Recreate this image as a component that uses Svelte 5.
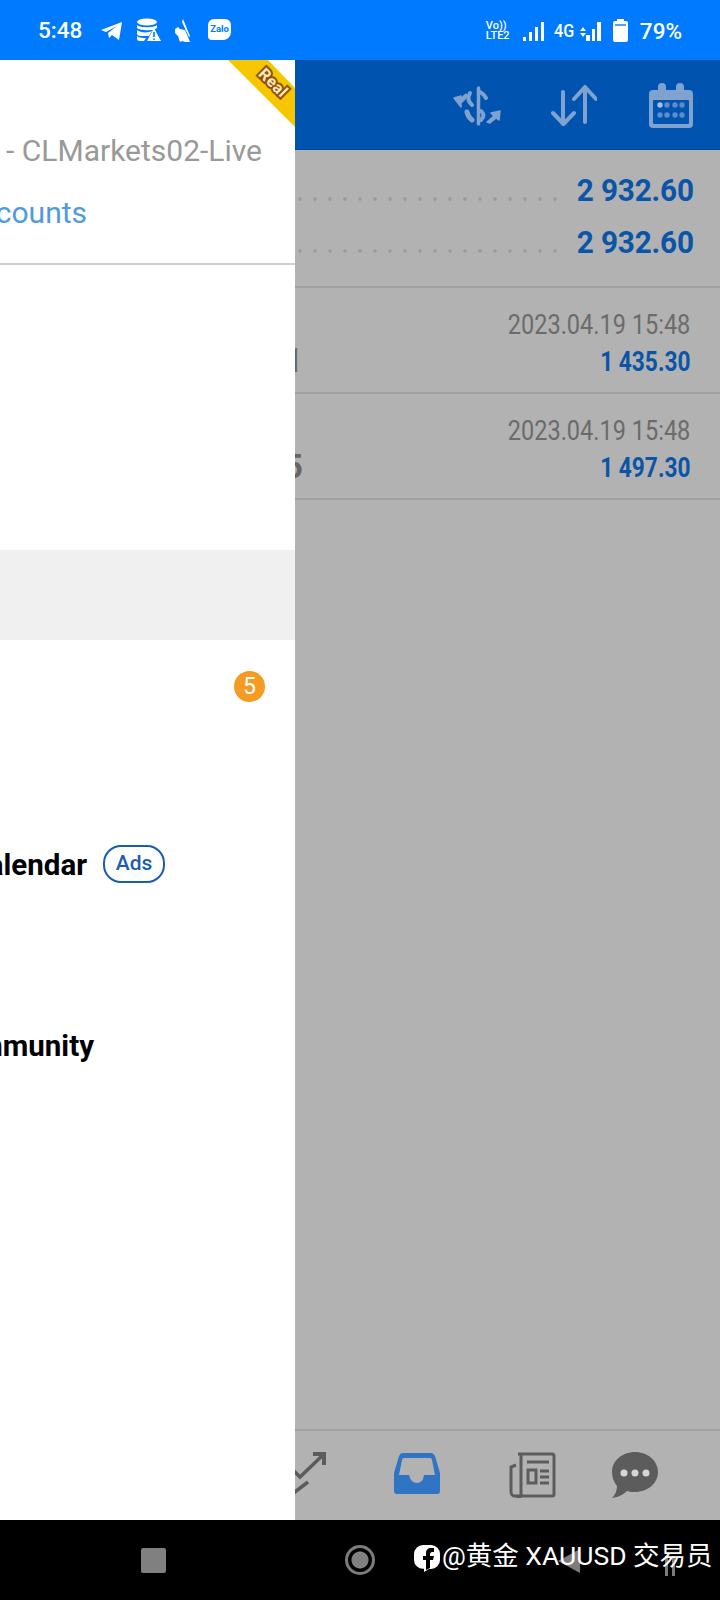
<script>
  const summary = [{ value: '2 932.60' }, { value: '2 932.60' }];
  const deals = [
    { left: '0.01', time: '2023.04.19 15:48', amount: '1 435.30' },
    { left: '0.05', time: '2023.04.19 15:48', amount: '1 497.30' }
  ];
</script>

<div class="screen">
  <div class="status">
    <span class="clock">5:48</span>
    <svg class="st telegram" viewBox="0 0 22 18"><path d="M0 8 21 0 18 18 11 13 8 16 7 11 16 4 5 10Z" fill="#fff"/></svg>
    <svg class="st db" viewBox="0 0 24 24">
      <g fill="#fff">
        <ellipse cx="10" cy="4" rx="10" ry="3.5"/>
        <path d="M0 7c3 3 17 3 20 0v3c-3 3-17 3-20 0zM0 12c3 3 12 3 15 1l-3 5H4c-2 0-4-1-4-2zM0 18c2 2 6 2 9 2l-2 3H3c-2 0-3-1-3-2z"/>
        <path d="M17 10 24 23H10Z"/>
      </g>
      <path d="M17 14v5M17 20.500v1.500" stroke="#007aff" stroke-width="1.600"/>
    </svg>
    <svg class="st broom" viewBox="0 0 18 24"><path d="M9 0l7 17-1 1L8 3z M1 10l3-2 2 2 5 1 3 7 2 5-5 0-3-1-2 1-2-6-3-3z" fill="#fff"/></svg>
    <span class="zalo">Zalo</span>

    <span class="spacer"></span>

    <span class="volte"><b>Vo))</b><b>LTE2</b></span>
    <span class="bars"><i style="height: 4px"></i><i style="height: 9px"></i><i style="height: 14px"></i><i style="height: 19px"></i></span>
    <span class="net">4G</span>
    <span class="updown"><em></em><em class="down"></em></span>
    <span class="bars second"><i style="height: 6px"></i><i style="height: 12px"></i><i style="height: 19px"></i></span>
    <svg class="battery" viewBox="0 0 15 23"><path d="M4 0h7v2h2a2 2 0 0 1 2 2v17a2 2 0 0 1-2 2H2a2 2 0 0 1-2-2V4a2 2 0 0 1 2-2h2z" fill="#fff"/><rect x="2" y="5" width="11" height="2" fill="#007aff" opacity=".7"/></svg>
    <span class="pct">79%</span>
  </div>

  <div class="content">
    <div class="main">
      <header class="toolbar">
        <svg class="ic-dollar" viewBox="0 0 49 40" fill="none" stroke="#7fa2cf" stroke-width="4" stroke-linecap="round">
          <path d="M25.500 2V38" stroke-width="3.500"/>
          <path d="M17 7Q13 14 19 19"/>
          <path d="M14 26Q15 31 19 34" stroke-width="5"/>
          <path d="M27 6Q31 8 33 12"/>
          <path d="M28 25Q33 29 28 34"/>
          <path d="M1 12 8 10 6 14 13 8 14 11 8 17 8 21Z" fill="#7fa2cf" stroke-width="1.500" stroke-linejoin="round"/>
          <path d="M47 25 38 27 41 30 34 36 37 37 43 32 46 34Z" fill="#7fa2cf" stroke-width="1.500" stroke-linejoin="round"/>
        </svg>
        <svg class="ic-sort" viewBox="0 0 46 41" fill="none" stroke="#7fa2cf" stroke-width="4" stroke-linecap="round" stroke-linejoin="round">
          <path d="M12 7v32M2 28l10.500 11L23 28"/>
          <path d="M34 37V3M23 14 34 2l11 12"/>
        </svg>
        <svg class="ic-cal" viewBox="0 0 44 45">
          <rect x="0" y="7" width="44" height="38" rx="4" fill="#7fa2cf"/>
          <rect x="4" y="17" width="36" height="24" rx="1" fill="#0054b0"/>
          <rect x="9" y="0" width="8" height="11" rx="4" fill="#7fa2cf"/>
          <rect x="27" y="0" width="8" height="11" rx="4" fill="#7fa2cf"/>
          <g fill="#5f8cc4">
            <circle cx="11" cy="22" r="2.700" fill="#a9c0df"/><circle cx="18" cy="22" r="2.700"/><circle cx="26" cy="22" r="2.700"/><circle cx="33" cy="22" r="2.700"/>
            <circle cx="11" cy="32" r="2.700"/><circle cx="18" cy="32" r="2.700"/><circle cx="26" cy="32" r="2.700"/><circle cx="33" cy="32" r="2.700"/>
          </g>
        </svg>
      </header>

      <section class="summary">
        {#each summary as row}
          <div class="sum-row">
            <span class="dots"></span>
            <span class="sum-val">{row.value}</span>
          </div>
        {/each}
      </section>

      {#each deals as deal}
        <div class="deal">
          <span class="deal-left">{deal.left}</span>
          <div class="deal-right">
            <span class="time">{deal.time}</span>
            <span class="amount">{deal.amount}</span>
          </div>
        </div>
      {/each}

      <div class="fill"></div>

      <nav class="tabs">
        <svg class="tab-trade" viewBox="0 0 46 44" fill="none" stroke="#5c5c5c" stroke-width="3.500">
          <path d="M34 3H45V14" stroke-width="4"/>
          <path d="M45 3 21 26 10 15"/>
          <path d="M29 31 8 47"/>
        </svg>
        <svg class="tab-inbox" viewBox="0 0 46 41">
          <path d="M10 0H36a5 5 0 0 1 5 3l5 17V38a3 3 0 0 1-3 3H3a3 3 0 0 1-3-3V20L5 3a5 5 0 0 1 5-3Z" fill="#2f75c4"/>
          <path d="M10 5H36a2 2 0 0 1 2 2L41 22H30Q29 30 23 30Q17 30 15 22H5L8 7a2 2 0 0 1 2-2Z" fill="#b2b2b2"/>
        </svg>
        <svg class="tab-news" viewBox="0 0 47 46" fill="none" stroke="#5c5c5c">
          <path d="M9 2h34a2 2 0 0 1 2 2v38a2 2 0 0 1-2 2H8" stroke-width="3"/>
          <path d="M12 2v40a2 2 0 0 1-4 2H6a4 4 0 0 1-4-4V15l5-2" stroke-width="3"/>
          <path d="M18 10h22" stroke-width="3"/>
          <rect x="19" y="18" width="8" height="13" stroke-width="3"/>
          <path d="M31 19h9M31 25h9M31 31h9" stroke-width="3"/>
        </svg>
        <svg class="tab-chat" viewBox="0 0 46 46">
          <path d="M23 0c13 0 23 9 23 20S36 40 23 40c-3 0-5 0-8 -1-3 3-8 6-15 7 3-3 5-7 5-12C2 30 0 26 0 20 0 9 10 0 23 0z" fill="#5c5c5c"/>
          <circle cx="12" cy="21" r="3.500" fill="#d6d6d6"/><circle cx="23" cy="21" r="3.500" fill="#d6d6d6"/><circle cx="34" cy="21" r="3.500" fill="#d6d6d6"/>
        </svg>
      </nav>
    </div>

    <aside class="drawer">
      <div class="ribbon"></div>
      <span class="real">Real</span>

      <div class="server"><span>Server - CLMarkets02-Live</span></div>
      <div class="manage"><span>Manage accounts</span></div>
      <div class="rule"></div>
      <div class="selected"></div>
      <div class="badge-row"><span class="badge">5</span></div>
      <div class="calendar"><span class="item">Economic calendar</span><span class="ads">Ads</span></div>
      <div class="community"><span class="item">Traders Community</span></div>
    </aside>
  </div>

  <div class="navbar">
    <span class="nav-square"></span>
    <span class="nav-circle"></span>
    <span class="nav-back"></span>
    <span class="nav-pause"></span>
    <div class="watermark">
      <svg class="fb" viewBox="0 0 26 27"><path d="M9 0h8a9 9 0 0 1 9 9v6a9 9 0 0 1-9 9h-2l-5 3v-3.200A9 9 0 0 1 0 15V9a9 9 0 0 1 9-9z" fill="#fff"/><path d="M12 25V15H9v-4h3V8c0-3 2-5 5-5h3v4h-2c-1 0-2 1-2 2v2h4l-1 4h-3v8z" fill="#000"/></svg>
      <span>@黄金 XAUUSD 交易员</span>
    </div>
  </div>
</div>

<style>
  :global(body) {
    margin: 0;
    background: #000;
  }

  .screen {
    width: 720px;
    height: 1600px;
    display: flex;
    flex-direction: column;
    overflow: hidden;
    font-family: Roboto, "Liberation Sans", "Noto Sans CJK SC", sans-serif;
  }

  /* status bar */
  .status {
    height: 60px;
    flex: none;
    background: #007aff;
    color: #fff;
    display: flex;
    align-items: center;
    padding: 0 38px 0 38px;
    box-sizing: border-box;
  }

  .clock {
    font-size: 22.500px;
    font-weight: 500;
    width: 64px;
  }

  .st { display: block; flex: none; }
  .telegram { width: 22px; height: 18px; margin-left: -1px; margin-top: 1px; }
  .db { width: 24px; height: 24px; margin-left: 14px; }
  .broom { width: 18px; height: 24px; margin-left: 13px; margin-top: 1px; }

  .zalo {
    width: 23px;
    height: 21px;
    margin-left: 16px;
    margin-top: -2px;
    background: #fff;
    color: #007aff;
    border-radius: 6px 6px 8px 4px;
    font-size: 9.500px;
    font-weight: 700;
    line-height: 20px;
    text-align: center;
  }

  .spacer { flex: 1; }

  .volte {
    display: flex;
    flex-direction: column;
    width: 24px;
    margin-top: 1px;
    line-height: 10px;
  }

  .volte b {
    font-size: 11px;
    font-weight: 500;
    white-space: nowrap;
  }

  .bars {
    display: flex;
    align-items: flex-end;
    gap: 2.500px;
    height: 19px;
    margin-left: 13px;
    margin-top: 2px;
  }

  .bars i {
    display: block;
    width: 3.500px;
    background: #fff;
  }

  .bars.second {
    margin-left: 0;
    gap: 2px;
  }

  .net {
    font-size: 18px;
    font-weight: 500;
    width: 20px;
    margin-left: 9px;
    margin-top: 1px;
    text-align: center;
    transform: scaleX(.9);
  }

  .updown {
    display: flex;
    flex-direction: column;
    gap: 2px;
    margin-left: 7px;
    margin-top: 4px;
  }

  .updown em {
    width: 0;
    height: 0;
    border: 3px solid transparent;
    border-top: 0;
    border-bottom: 4px solid #fff;
  }

  .updown em.down {
    border-bottom: 0;
    border-top: 4px solid #fff;
  }

  .battery {
    width: 15px;
    height: 23px;
    margin-left: 12px;
    margin-top: 1px;
  }

  .pct {
    font-size: 22.500px;
    font-weight: 500;
    margin-left: 12px;
    margin-top: 1px;
  }

  /* page behind the drawer */
  .content {
    position: relative;
    flex: 1;
    min-height: 0;
  }

  .main {
    height: 100%;
    background: #b2b2b2;
    display: flex;
    flex-direction: column;
  }

  .toolbar {
    height: 90px;
    flex: none;
    box-sizing: border-box;
    background: #0054b0;
    border-bottom: 1px solid #004c9f;
    display: flex;
    align-items: center;
    justify-content: flex-end;
    padding: 0 27px 0 0;
  }

  .ic-dollar { width: 49px; height: 40px; margin-right: 49px; margin-top: 2px; }
  .ic-sort { width: 46px; height: 41px; margin-right: 52px; margin-top: 2px; }
  .ic-cal { width: 44px; height: 45px; margin-top: 2px; }

  .summary {
    height: 138px;
    box-sizing: border-box;
    flex: none;
    border-bottom: 2px solid #a0a0a0;
    padding: 23px 26px 0 298px;
    display: flex;
    flex-direction: column;
    gap: 17px;
  }

  .sum-row {
    height: 35px;
    display: flex;
    align-items: center;
  }

  .dots {
    flex: 1;
    height: 4px;
    margin: 17px 11px 0 0;
    background: radial-gradient(circle at 2px 2px, #9c9c9c 1.500px, transparent 2px) 0 0 / 15px 4px repeat-x;
  }

  .sum-val {
    font-size: 31px;
    font-weight: 700;
    letter-spacing: -.2px;
    color: #0a55a8;
    line-height: 35px;
    transform: scaleX(.96);
    transform-origin: right center;
    white-space: nowrap;
  }

  .deal {
    height: 106px;
    flex: none;
    box-sizing: border-box;
    border-bottom: 2px solid #a0a0a0;
    display: flex;
    justify-content: flex-end;
    position: relative;
    padding: 21px 30px 0 0;
  }

  .deal-left {
    position: absolute;
    right: 417px;
    top: 54px;
    font-size: 33px;
    font-weight: 700;
    color: #666;
    line-height: 38px;
  }

  .deal-right {
    display: flex;
    flex-direction: column;
    align-items: flex-end;
    gap: 5px;
  }

  .time {
    font-size: 28px;
    line-height: 32px;
    color: #6b6b6b;
    transform: scaleX(.84);
    transform-origin: right center;
    white-space: nowrap;
  }

  .amount {
    font-size: 27px;
    font-weight: 700;
    line-height: 33px;
    color: #0a55a8;
    transform: scaleX(.84);
    transform-origin: right center;
    white-space: nowrap;
  }

  .fill { flex: 1; }

  .tabs {
    height: 91px;
    flex: none;
    box-sizing: border-box;
    border-top: 2px solid #a0a0a0;
    display: flex;
    justify-content: flex-end;
    align-items: flex-start;
    padding: 21px 62px 0 0;
  }

  .tab-trade { width: 46px; height: 44px; margin-right: 69px; margin-top: -1px; overflow: visible; }
  .tab-inbox { width: 46px; height: 41px; margin-right: 69px; margin-top: 1px; }
  .tab-news { width: 47px; height: 46px; margin-right: 56px; }
  .tab-chat { width: 46px; height: 46px; }

  /* drawer */
  .drawer {
    position: absolute;
    left: 0;
    top: 0;
    bottom: 0;
    width: 295px;
    background: #fff;
    overflow: hidden;
  }

  .ribbon {
    position: absolute;
    top: 0;
    right: 0;
    width: 67px;
    height: 67px;
    background: #f6c700;
    clip-path: polygon(0 0, 40px 0, 67px 28px, 67px 67px);
  }

  .real {
    position: absolute;
    top: 13px;
    left: 253px;
    width: 40px;
    text-align: center;
    transform: rotate(45deg);
    font-size: 16px;
    line-height: 20px;
    font-weight: 700;
    letter-spacing: .5px;
    color: #ffe9bd;
    -webkit-text-stroke: 4px #8f5208;
    paint-order: stroke fill;
  }

  .server,
  .manage,
  .calendar,
  .community,
  .badge-row {
    display: flex;
    justify-content: flex-end;
    align-items: center;
    white-space: nowrap;
  }

  .server {
    margin-top: 70px;
    height: 40px;
    padding-right: 33px;
    font-size: 30px;
    color: #999;
  }

  .manage {
    margin-top: 22px;
    height: 40px;
    padding-right: 208px;
    font-size: 30px;
    color: #4f9bdc;
  }

  .rule {
    height: 2px;
    margin-top: 31px;
    background: #d0d0d0;
  }

  .selected {
    height: 90px;
    margin-top: 285px;
    background: #f0f0f0;
  }

  .badge-row {
    height: 31px;
    margin-top: 31px;
    padding-right: 30px;
  }

  .badge {
    width: 31px;
    height: 31px;
    border-radius: 50%;
    background: #f59a23;
    color: #fff;
    font-size: 23px;
    line-height: 31px;
    text-align: center;
  }

  .calendar {
    margin-top: 142px;
    height: 38px;
    position: relative;
  }

  .item {
    font-size: 29.500px;
    font-weight: 700;
    color: #000;
  }

  .ads {
    position: absolute;
    left: 103px;
    top: 1px;
    width: 58px;
    height: 34px;
    border: 2px solid #1a5cb0;
    border-radius: 18px;
    color: #1a5cb0;
    font-size: 21px;
    font-weight: 500;
    line-height: 33px;
    text-align: center;
  }

  .calendar .item {
    position: absolute;
    right: 208px;
    top: 2px;
    line-height: 38px;
  }

  .community {
    margin-top: 145px;
    height: 38px;
    padding-right: 201px;
  }

  /* navigation bar */
  .navbar {
    height: 80px;
    flex: none;
    background: #000;
    position: relative;
  }

  .nav-square {
    position: absolute;
    left: 141px;
    top: 28px;
    width: 25px;
    height: 25px;
    border-radius: 2px;
    background: #808080;
  }

  .nav-circle {
    position: absolute;
    left: 345px;
    top: 25px;
    width: 24px;
    height: 24px;
    border: 3px solid #7c7c7c;
    border-radius: 50%;
    background: radial-gradient(circle, #808080 0 8px, #000 9px);
  }

  .nav-back {
    position: absolute;
    left: 558px;
    top: 29px;
    width: 0;
    height: 0;
    border: 12px solid transparent;
    border-left: 0;
    border-right: 22px solid #7c7c7c;
  }

  .nav-pause {
    position: absolute;
    left: 665px;
    top: 36px;
    width: 4px;
    height: 20px;
    border-left: 3px solid #7c7c7c;
    border-right: 3px solid #7c7c7c;
  }

  .watermark {
    position: absolute;
    left: 414px;
    top: 14px;
    display: flex;
    align-items: center;
    gap: 2px;
    color: #fff;
    font-size: 26.500px;
    white-space: nowrap;
  }

  .fb { width: 26px; height: 27px; margin-top: 10px; }
</style>
